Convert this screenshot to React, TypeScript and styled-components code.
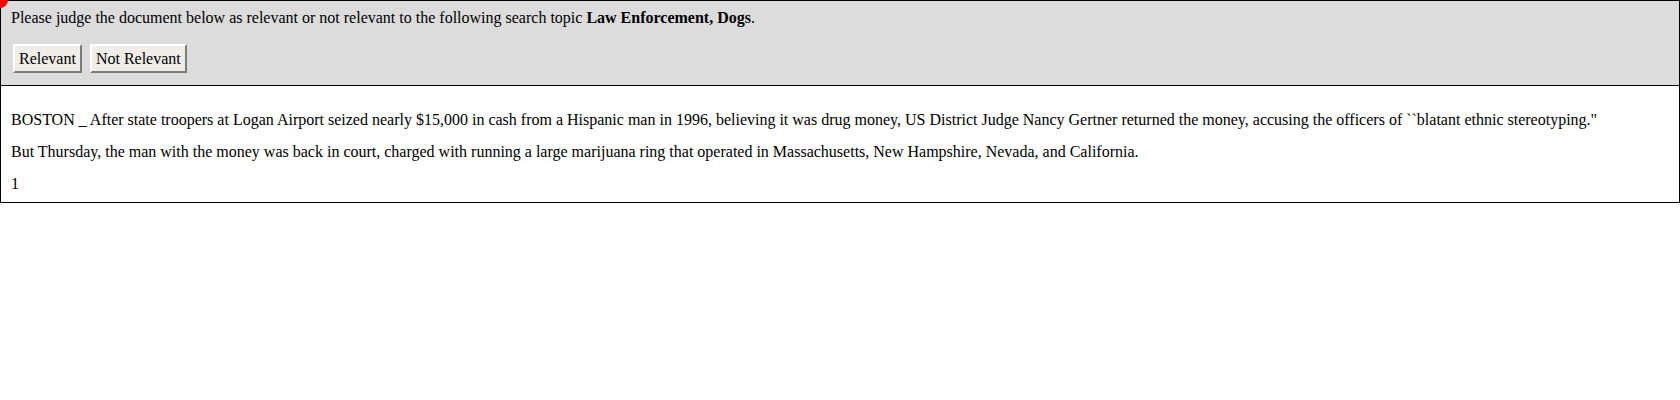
import React from "react";
import styled, { createGlobalStyle } from "styled-components";

const GlobalStyle = createGlobalStyle`
  body {
    margin: 0;
    font-family: "Liberation Serif", "Times New Roman", serif;
    font-size: 16px;
    color: #000;
    background: #fff;
  }
`;

const App = () => {
  return (
    <>
      <GlobalStyle />
      <Page>
        <Marker />
        <JudgePanel>
          <Prompt>
            Please judge the document below as relevant or not relevant to the
            following search topic <b>Law Enforcement, Dogs</b>.
          </Prompt>
          <ButtonRow>
            <JudgeButton type="button">Relevant</JudgeButton>
            <JudgeButton type="button">Not Relevant</JudgeButton>
          </ButtonRow>
        </JudgePanel>
        <DocBody>
          <Para>
            BOSTON _ After state troopers at Logan Airport seized nearly $15,000
            in cash from a Hispanic man in 1996, believing it was drug money, US
            District Judge Nancy Gertner returned the money, accusing the
            officers of ``blatant ethnic stereotyping."
          </Para>
          <Para>
            But Thursday, the man with the money was back in court, charged with
            running a large marijuana ring that operated in Massachusetts, New
            Hampshire, Nevada, and California.
          </Para>
          <Para>1</Para>
        </DocBody>
      </Page>
    </>
  );
};

export default App;

const Page = styled.main`
  position: relative;
  border: 1px solid #000;
`;

const Marker = styled.span`
  position: absolute;
  top: -9px;
  left: -9px;
  width: 16px;
  height: 16px;
  border-radius: 50%;
  background: #ff0000;
`;

const JudgePanel = styled.section`
  background: #dcdcdc;
  border-bottom: 1px solid #000;
  padding: 8px 10px 12px;
`;

const Prompt = styled.p`
  margin: 0 0 17px;
  line-height: 18px;

  b {
    font-weight: 700;
  }
`;

const ButtonRow = styled.div`
  display: flex;
  gap: 8px;
  padding-left: 2px;
`;

const JudgeButton = styled.button`
  font-family: "Liberation Serif", "Times New Roman", serif;
  font-size: 16px;
  color: #000;
  background: #f0ede8;
  border: 2px solid;
  border-color: #ffffff #7d7b78 #7d7b78 #ffffff;
  padding: 3px 4px;
  line-height: 19px;
  cursor: pointer;
`;

const DocBody = styled.section`
  padding: 11px 10px 0;
`;

const Para = styled.p`
  margin: 14px 0;
  line-height: 18px;

  &:last-child {
    margin-bottom: 9px;
  }
`;
